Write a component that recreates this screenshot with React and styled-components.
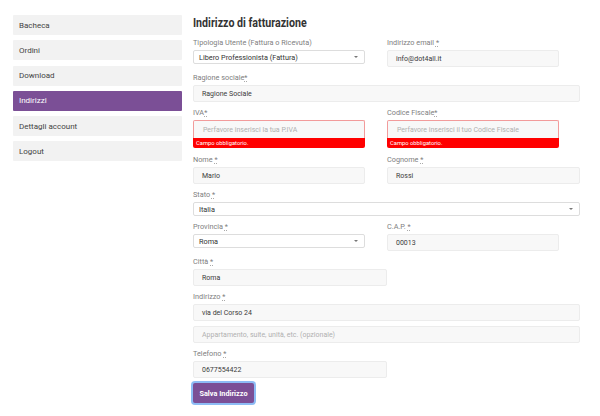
import React from 'react'
import styled, { createGlobalStyle } from 'styled-components'

const GlobalStyle = createGlobalStyle`
  html, body {
    margin: 0;
    padding: 0;
    background: #fff;
  }
  body {
    font-family: Roboto, "Liberation Sans", sans-serif;
    color: #333;
  }
`

const Page = styled.div`
  display: flex;
  align-items: flex-start;
  gap: 11px;
  padding: 15px 20px 0 13px;
  width: 600px;
  height: 416px;
  box-sizing: border-box;
`

const Sidebar = styled.nav`
  width: 170px;
  display: flex;
  flex-direction: column;
  gap: 5.3px;
`

const NavItem = styled.div`
  height: 20px;
  display: flex;
  align-items: center;
  padding-left: 6px;
  font-size: 8px;
  background: ${(p) => (p.$active ? '#7b4f96' : '#f2f2f2')};
  color: ${(p) => (p.$active ? '#fff' : '#444')};
  border-radius: 1px;
`

const Main = styled.main`
  width: 387px;
  display: flex;
  flex-direction: column;
`

const Title = styled.h2`
  margin: 1px 0 8px;
  font-family: Roboto, sans-serif;
  font-weight: 700;
  font-size: 13px;
  line-height: 14px;
  color: #333;
  white-space: nowrap;
  transform: scaleX(0.82);
  transform-origin: left center;
`

const Form = styled.div`
  display: flex;
  flex-direction: column;
  gap: 6px;
`

const Row = styled.div`
  display: flex;
  gap: 22px;
  align-items: flex-start;
  margin-top: ${(p) => p.$mt || 0}px;
`

const Field = styled.div`
  width: ${(p) => p.$w}px;
  display: flex;
  flex-direction: column;
  gap: ${(p) => p.$gap || 0}px;
`

const Stack = styled.div`
  display: flex;
  flex-direction: column;
`

const Label = styled.label`
  font-size: 7.3px;
  line-height: 10px;
  height: 10px;
  margin-bottom: 2px;
  color: #808080;
  abbr {
    color: #808080;
    text-decoration: underline dotted;
    text-decoration-color: #aaa;
  }
`

const Input = styled.div`
  height: 17px;
  box-sizing: border-box;
  background: #f8f8f8;
  border: 1px solid ${(p) => (p.$error ? '#f29b9b' : '#ececec')};
  border-radius: 2px;
  display: flex;
  align-items: center;
  padding-left: ${(p) => (p.$error ? 9 : 8)}px;
  font-size: 7px;
  color: ${(p) => (p.$placeholder ? '#b0b0b0' : '#3a3a3a')};
  ${(p) => p.$error && 'height: 18px; border-bottom: none; border-radius: 2px 2px 0 0;'}
`

const ErrorBar = styled.div`
  height: 10px;
  background: #ff0000;
  color: #fff;
  font-size: 5.8px;
  display: flex;
  align-items: center;
  padding-left: 3px;
  border-radius: 0 0 2px 2px;
`

const Select = styled.div`
  height: 14px;
  box-sizing: border-box;
  background: #fff;
  border: 1px solid #ddd;
  border-radius: 2px;
  display: flex;
  align-items: center;
  justify-content: space-between;
  padding: 0 6px 0 5px;
  font-size: 7.3px;
  color: #333;
  &::after {
    content: '';
    border-left: 2px solid transparent;
    border-right: 2px solid transparent;
    border-top: 2.5px solid #777;
  }
`

const Button = styled.button`
  align-self: flex-start;
  margin-top: 5px;
  height: 20px;
  width: 61px;
  padding: 0;
  background: #7b4f96;
  color: #fff;
  font-family: Roboto, sans-serif;
  font-weight: 700;
  font-size: 7.3px;
  border: none;
  border-radius: 2px;
  box-shadow: 0 0 0 2px #8dbcf5;
`

const Req = () => <abbr>*</abbr>

const navItems = ['Bacheca', 'Ordini', 'Download', 'Indirizzi', 'Dettagli account', 'Logout']

export default function App() {
  return (
    <>
      <GlobalStyle />
      <Page>
        <Sidebar>
          {navItems.map((n) => (
            <NavItem key={n} $active={n === 'Indirizzi'}>{n}</NavItem>
          ))}
        </Sidebar>
        <Main>
          <Title>Indirizzo di fatturazione</Title>
          <Form>
            <Row>
              <Field $w={172}>
                <Label>Tipologia Utente (Fattura o Ricevuta)</Label>
                <Select>Libero Professionista (Fattura)</Select>
              </Field>
              <Field $w={172}>
                <Label>Indirizzo email <Req /></Label>
                <Input>info@dot4all.it</Input>
              </Field>
            </Row>
            <Field $w={387}>
              <Label>Ragione sociale<Req /></Label>
              <Input>Ragione Sociale</Input>
            </Field>
            <Row>
              <Field $w={172}>
                <Label>IVA<Req /></Label>
                <Input $error $placeholder>Perfavore inserisci la tua P.IVA</Input>
                <ErrorBar>Campo obbligatorio.</ErrorBar>
              </Field>
              <Field $w={172}>
                <Label>Codice Fiscale<Req /></Label>
                <Input $error $placeholder>Perfavore inserisci il tuo Codice Fiscale</Input>
                <ErrorBar>Campo obbligatorio.</ErrorBar>
              </Field>
            </Row>
            <Row $mt={1}>
              <Field $w={172}>
                <Label>Nome <Req /></Label>
                <Input>Mario</Input>
              </Field>
              <Field $w={193}>
                <Label>Cognome <Req /></Label>
                <Input>Rossi</Input>
              </Field>
            </Row>
            <Field $w={387}>
              <Label>Stato <Req /></Label>
              <Select>Italia</Select>
            </Field>
            <Row>
              <Field $w={172}>
                <Label>Provincia <Req /></Label>
                <Select>Roma</Select>
              </Field>
              <Field $w={172}>
                <Label>C.A.P. <Req /></Label>
                <Input>00013</Input>
              </Field>
            </Row>
            <Field $w={194}>
              <Label>Città <Req /></Label>
              <Input>Roma</Input>
            </Field>
            <Field $w={387} $gap={5}>
              <Stack>
                <Label>Indirizzo <Req /></Label>
                <Input>via del Corso 24</Input>
              </Stack>
              <Input $placeholder>Appartamento, suite, unità, etc. (opzionale)</Input>
            </Field>
            <Field $w={194}>
              <Label>Telefono <Req /></Label>
              <Input>0677554422</Input>
            </Field>
          </Form>
          <Button>Salva Indirizzo</Button>
        </Main>
      </Page>
    </>
  )
}
